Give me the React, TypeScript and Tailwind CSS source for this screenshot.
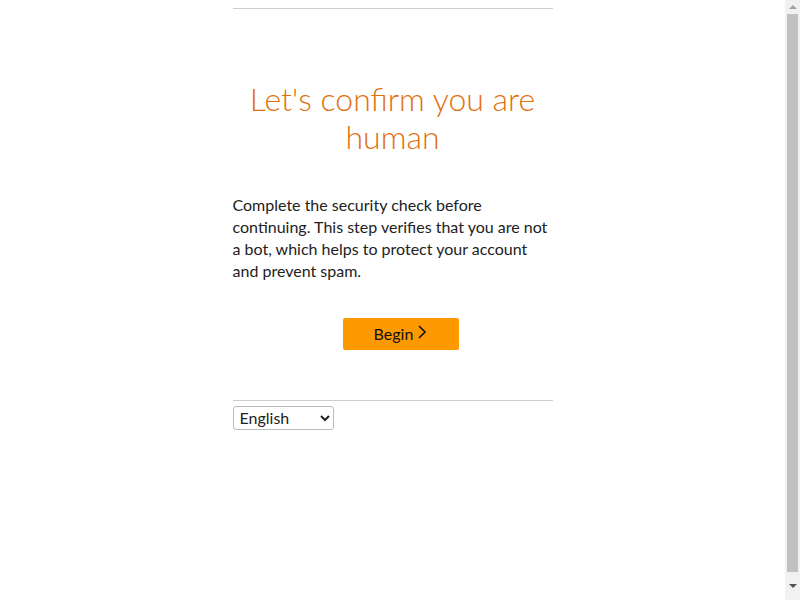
import React from "react";

function FakeScrollbar() {
  return (
    <div className="flex h-[600px] w-[15px] shrink-0 flex-col items-center bg-[#f1f1f1]">
      <div className="flex h-[14px] w-full items-center justify-center">
        <div className="h-0 w-0 border-x-[4px] border-b-[4px] border-x-transparent border-b-[#a3a3a3]" />
      </div>
      <div className="w-[11px] flex-1 bg-[#c1c1c1]" />
      <div className="flex h-[28px] w-full items-center justify-center">
        <div className="h-0 w-0 border-x-[4px] border-t-[4px] border-x-transparent border-t-[#505050]" />
      </div>
    </div>
  );
}

export default function App() {
  return (
    <div
      className="flex h-[600px] overflow-hidden bg-white text-[#111]"
      style={{ fontFamily: 'Lato, "Open Sans", sans-serif' }}
    >
      <div className="flex-1">
        <div className="mx-auto w-[320px] pt-2">
          <div className="h-px bg-[#cccccc]" />

          {/* Heading */}
          <h1 className="mt-[71px] text-center text-[32px] leading-[38px] font-light text-[#e2700f]">
            Let's confirm you are human
          </h1>

          {/* Description */}
          <p className="mt-[38px] text-[16px] leading-[22px] text-[#222]">
            Complete the security check before continuing. This step verifies that you are not a bot, which helps to protect your account and prevent spam.
          </p>

          <div className="mt-[36px] flex pl-[110px]">
            <button className="flex h-8 w-[116px] items-center justify-center gap-1 rounded-[2px] bg-[#ff9900] text-[16px] text-[#111]">
              <span>Begin</span>
              <svg width="10" height="16" viewBox="0 0 10 16" className="-mt-1">
                <path d="M2 2 L8 8 L2 14" fill="none" stroke="#111" strokeWidth="1.6" />
              </svg>
            </button>
          </div>

          <div className="mt-[50px] h-px bg-[#cccccc]" />

          <select className="mt-[5px] h-6 w-[101px] rounded-[3px] border border-[#bbb] bg-white px-0.5 pb-0.5 text-[16px] leading-5 text-[#222]">
            <option>English</option>
          </select>
        </div>
      </div>
      <FakeScrollbar />
    </div>
  );
}
